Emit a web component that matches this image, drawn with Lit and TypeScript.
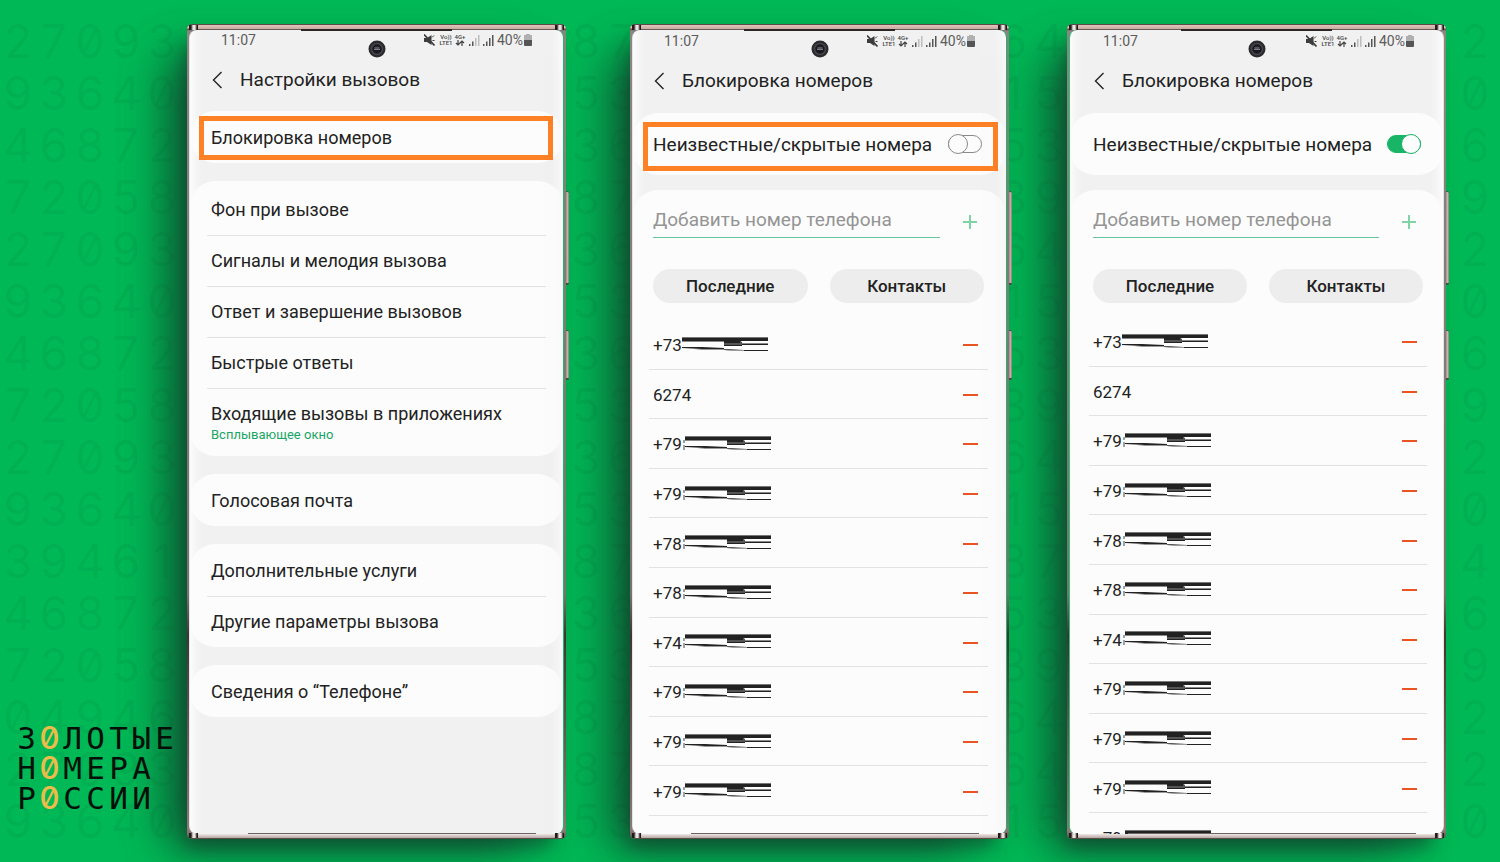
import { LitElement, html, css, svg, nothing } from "lit";
import { customElement, property } from "lit/decorators.js";

const LEFT = ["27093", "93640", "46872", "72058", "27093", "93640", "46872", "72058", "27093", "93640", "39461", "46872", "72058", "04946", "27093", "93640"];
const MIDDLE = ["87", "53", "36", "87", "36", "53", "36", "53", "36", "53", "87", "36", "53", "87", "87", "53"];
const RIGHT = ["64", "15", "53", "39", "64", "15", "53", "39", "64", "15", "87", "53", "39", "64", "64", "15"];
const EDGE = ["2", "0", "6", "9", "2", "0", "6", "9", "2", "0", "4", "6", "9", "2", "2", "0"];
const NUMBERS = ["+73", "6274", "+79", "+79", "+78", "+78", "+74", "+79", "+79", "+79"];

@customElement("digit-column")
class DigitColumn extends LitElement {
  @property({ attribute: false }) rows: string[] = [];
  static styles = css`
    :host { display: flex; flex-direction: column; justify-content: space-between; min-width: 0; padding: 15px 0 19px; box-sizing: border-box; height: 100vh; }
    .row { display: flex; height: 52px; align-items: center; }
    :host(.right) .row { justify-content: flex-end; }
    .cell { flex: 0 0 36px; text-align: center; font: 400 46px/52px Inter, sans-serif; font-feature-settings: "zero" 1; color: rgba(0, 90, 45, 0.1); }
  `;
  render() {
    return this.rows.map((r) => html`<div class="row">${[...r].map((d) => html`<span class="cell">${d}</span>`)}</div>`);
  }
}

@customElement("brand-mark")
class BrandMark extends LitElement {
  static styles = css`
    :host { display: block; }
    .line { display: flex; height: 30px; }
    .letter { flex: 0 0 23px; display: flex; justify-content: center; font: 400 31px/30px "DejaVu Sans Mono", monospace; color: #071008; }
    .gold { font-family: Inter, sans-serif; font-weight: 500; font-feature-settings: "zero" 1; color: #ecbc4b; }
  `;
  render() {
    return ["З0ЛОТЫЕ", "Н0МЕРА", "Р0ССИИ"].map(
      (w) => html`<div class="line">${[...w].map((c) => html`<span class="letter ${c === "0" ? "gold" : ""}">${c}</span>`)}</div>`
    );
  }
}

@customElement("status-bar")
class StatusBar extends LitElement {
  static styles = css`
    :host { display: flex; align-items: center; justify-content: space-between; height: 20px; font: 400 14px/20px Roboto, sans-serif; color: #5c5c5c; }
    .right { display: flex; align-items: center; }
    .tiny { display: block; font: 500 6px/6px Roboto, sans-serif; text-align: center; color: #444; }
    .net { width: 14px; margin-left: 4px; }
    .gen { width: 12px; margin-left: 1px; }
    .bars { margin-left: 3px; }
    .percent { margin: 0 1px 0 3px; }
    svg { display: block; }
  `;
  bars(tone: string) {
    return html`<svg class="bars" width="11" height="12" viewBox="0 0 11 12">
      <path d="M0 10h1.500v2H0z M3 7.500h1.500v4.500H3z" fill="#555" /><path d="M6 4h1.500v8H6z M9 1h1.500v11H9z" fill=${tone} />
    </svg>`;
  }
  render() {
    return html`<span>11:07</span>
      <div class="right">
        <svg width="11" height="12" viewBox="0 0 11 12">
          <path d="M0 4h3L7.500 1v10L3 8H0z" fill="#3d3d3d" /><path d="M8 3.500l2-2M8.500 6.500h2" stroke="#3d3d3d" />
          <path d="M0 .5l10.500 11" stroke="#3d3d3d" stroke-width="1.600" />
        </svg>
        <span class="net"><span class="tiny">Vo))</span><span class="tiny">LTE1</span></span>
        <span class="gen"><span class="tiny">4G+</span>
          <svg width="12" height="6" viewBox="0 0 12 6"><path d="M4 0v5M2 3l2 2 2-2M8 6V1M6 3l2-2 2 2" fill="none" stroke="#444" stroke-width="1.200" /></svg>
        </span>
        ${this.bars("#bdbdbd")}${this.bars("#555")}
        <span class="percent">40%</span>
        <svg width="8" height="12" viewBox="0 0 8 12"><path d="M2 0h4v1h2v6H0V1h2z" fill="#b0b0b0" /><path d="M0 6h8v5q0 1-1 1H1q-1 0-1-1z" fill="#555" /></svg>
      </div>`;
  }
}

@customElement("phone-frame")
class PhoneFrame extends LitElement {
  @property() heading = "";
  static styles = css`
    :host { position: relative; display: block; box-sizing: border-box; min-width: 0; height: calc(100vh - 47px); margin-top: 24px; padding: 6px 2px 5px; border-radius: 5px;
      background: linear-gradient(#5b4a48 0 1px, #d9bdb5 2px 4px, #5b4a48 5px, #8b8682 7px, #77746f 70%, #3f3535 75%, #8b7b78 99%, #5b4a48);
      box-shadow: -8px 14px 18px -6px rgba(18, 60, 42, 0.6), -32px 20px 44px -12px rgba(18, 60, 42, 0.8); }
    .screen { display: flex; flex-direction: column; box-sizing: border-box; height: 100%; overflow: hidden; border-radius: 8px; padding-top: var(--shift, 0);
      background: linear-gradient(90deg, #fcfcfc, #f5f5f5 6px, #f1f1f1 12px, #f1f1f1 calc(100% - 12px), #f5f5f5 calc(100% - 6px), #fcfcfc);
      border-left: var(--left-line, 1px solid #e4e4e4); border-right: var(--right-line, 1px solid #28b56c); }
    status-bar { flex: none; padding: 0 var(--status-right, 31px) 0 var(--status-left, 31px); }
    header { display: flex; align-items: center; flex: none; height: 59px; padding-left: var(--head, 22px); }
    .back { display: block; padding: 0; border: 0; background: none; line-height: 0; }
    h1 { margin: 0 0 0 17px; font: 400 19px/24px Roboto, sans-serif; color: #222; }
    .camera { position: absolute; left: calc(50% - 9px); top: 16px; }
    .key { position: absolute; left: 100%; width: 3px; border-radius: 0 2px 2px 0; background: linear-gradient(90deg, #8d6d69, #dcc6c1 1px, #8b7f7b); border-top: 1px solid #555; border-bottom: 2px solid #4b4b45; box-sizing: border-box; }
    .volume { top: 167px; height: 94px; }
    .power { top: 306px; height: 50px; }
    .rail { position: absolute; left: 10px; right: 10px; height: 4px; border-radius: 2px; box-sizing: border-box; }
    .upper { top: 1px; background: linear-gradient(#e2c4bb, #c9aaa2); }
    .lower { bottom: 1px; background: linear-gradient(#efe8e6, #b7a6a3); }
    .corner { position: absolute; width: 9px; height: 5px; box-sizing: border-box; background: linear-gradient(90deg, #241c1c 0 2px, #e9e3e1 4px 6px, #241c1c 8px); }
    .tl { left: 2px; top: 1px; }
    .tr { right: 2px; top: 1px; }
    .bl { left: 2px; bottom: 1px; }
    .br { right: 2px; bottom: 1px; }
    .earpiece { position: absolute; top: 5px; left: 30%; right: 30%; height: 2px; background: #2d2424; }
    .port { position: absolute; bottom: 5px; left: 16%; right: 8%; height: 1px; background: #6b6666; }
  `;
  render() {
    return html`<div class="screen">
        <status-bar></status-bar>
        <header>
          <button class="back" aria-label="Назад">
            <svg width="11" height="18" viewBox="0 0 11 18"><path d="M9.500 1L1.500 9l8 8" fill="none" stroke="#222" stroke-width="1.400" /></svg>
          </button>
          <h1>${this.heading}</h1>
        </header>
        <slot></slot>
      </div>
      <svg class="camera" width="18" height="18" viewBox="0 0 18 18">
        <circle cx="9" cy="9" r="8.500" fill="#2a292b" /><circle cx="9" cy="9" r="5.500" fill="#19191d" stroke="#46454d" stroke-width="1.500" />
        <ellipse cx="9" cy="8" rx="3" ry="1.300" fill="#55535f" /><path d="M6 9.500h6" stroke="#7c7a89" />
      </svg>
      <span class="rail upper"></span><span class="rail lower"></span>
      <span class="corner tl"></span><span class="corner tr"></span><span class="corner bl"></span><span class="corner br"></span>
      <span class="earpiece"></span><span class="port"></span>
      <span class="key volume"></span><span class="key power"></span>`;
  }
}

@customElement("settings-menu")
class SettingsMenu extends LitElement {
  static styles = css`
    :host { display: flex; flex-direction: column; gap: 18px; margin-top: 2px; }
    .card { position: relative; padding-top: 1px; border-radius: 25px; background: #fcfcfc; }
    .long { padding-top: 3px; }
    .item { display: block; box-sizing: border-box; width: calc(100% - 34px); height: 51px; margin: 0 17px; padding: 0 4px; border: 0; background: none; text-align: left; font: 400 18px/24px Roboto, sans-serif; color: #222; }
    .item + .item { border-top: 1px solid #e2e2e2; }
    .double { height: 68px; }
    .note { display: block; font-size: 13px; line-height: 18px; color: #18a566; }
    .mark { position: absolute; inset: 5px 10px 3px 9px; border: 5px solid #ff8126; pointer-events: none; }
  `;
  render() {
    const item = (t: string) => html`<button class="item">${t}</button>`;
    return html`
      <div class="card">${item("Блокировка номеров")}<span class="mark"></span></div>
      <div class="card long">
        ${["Фон при вызове", "Сигналы и мелодия вызова", "Ответ и завершение вызовов", "Быстрые ответы"].map(item)}
        <button class="item double">Входящие вызовы в приложениях<span class="note">Всплывающее окно</span></button>
      </div>
      <div class="card">${item("Голосовая почта")}</div>
      <div class="card">${item("Дополнительные услуги")}${item("Другие параметры вызова")}</div>
      <div class="card">${item("Сведения о “Телефоне”")}</div>`;
  }
}

@customElement("block-list")
class BlockList extends LitElement {
  @property({ type: Boolean }) on = false;
  @property({ type: Boolean }) marked = false;
  @property({ attribute: false }) numbers: string[] = NUMBERS;
  static styles = css`
    :host { display: flex; flex-direction: column; flex: 1; min-height: 0; gap: 15px; margin-top: 3px; font: 400 18px/24px Roboto, sans-serif; color: #222; }
    .card { position: relative; flex: none; box-sizing: border-box; background: #fcfcfc; border-radius: 25px; padding: 0 var(--pad-right) 0 var(--pad-left); }
    .toggle { display: flex; align-items: center; justify-content: space-between; height: 62px; padding-right: calc(var(--pad-right) + 6px); padding-left: calc(var(--pad-left) + 4px); }
    .toggle label { font-size: 19px; padding-top: 1px; white-space: nowrap; }
    .switch { position: relative; flex: none; appearance: none; margin: 0; box-sizing: border-box; width: 34px; height: 18px; border: 1px solid #8a8a8a; border-radius: 9px; background: #fcfcfc; }
    .switch::before { content: ""; position: absolute; left: -1px; top: -2px; box-sizing: border-box; width: 20px; height: 20px; border: 1px solid #8a8a8a; border-radius: 50%; background: #fcfcfc; }
    .switch:checked { background: #18b566; border-color: #18b566; }
    .switch:checked::before { left: auto; right: -1px; border-color: #18b566; }
    .mark { position: absolute; inset: 9px 8px 4px 10px; border: 5px solid #ff8126; pointer-events: none; }
    .main { flex: 1; border-radius: 25px 25px 0 0; min-height: 0; padding-top: 14px; }
    .entry { display: flex; align-items: center; justify-content: space-between; padding: 0 9px 0 4px; }
    .field { flex: 1; min-width: 0; height: 34px; box-sizing: border-box; margin-right: 21px; padding: 0 0 3px; border: 0; outline: 0; border-radius: 0; background: linear-gradient(#62c79c, #62c79c) bottom / 100% 1px no-repeat; font: 400 19px/24px Roboto, sans-serif; }
    .field::placeholder { color: #949494; opacity: 1; }
    .icon { display: block; padding: 0; border: 0; background: none; line-height: 0; }
    .icon.add { padding-top: 2px; }
    .tabs { display: grid; grid-template-columns: 1fr 1fr; gap: 22px; margin: 31px 4px 0; }
    .tabs button { height: 34px; padding: 0; border: 0; border-radius: 17px; background: #ededed; font: 500 17px/24px Roboto, sans-serif; color: #222; }
    ul { display: flex; flex-direction: column; height: 496px; margin: var(--list-gap) 0 0; padding: 0; list-style: none; }
    li { display: flex; align-items: center; flex: 0 0 10%; box-sizing: border-box; padding: 2px 10px 0 4px; border-bottom: 1px solid #e2e2e2; font-size: 17px; }
    .scribble { display: block; margin-bottom: 1px; }
    .icon.remove { margin-left: auto; }
  `;
  scribble(full: boolean) {
    return html`<svg class="scribble" width="90" height="16" viewBox="0 0 90 16" aria-hidden="true">
      ${full ? nothing : svg`<path d="M2 4v3M2 9v5" stroke="#444" fill="none" />`}
      <g transform=${full ? "translate(0 0)" : "translate(3 0)"}>
        <rect width="86" height="15" fill="#fcfcfc" />
        <path d="M0 0h86v1H0z" fill="#777" />
        <path d="M0 1h86v3H60l-2 1H42L0 4z" fill="#222" />
        <path d="M0 4h42v1H0z" fill="#888" />
        <path d="M42 5h18v4H42z" fill="#555" /><path d="M42 5h16v1H42z M42 8h18v1H42z" fill="#222" />
        <path d="M60 7h26v1H60z" fill="#222" /><path d="M60 6h26v1H60z" fill="#888" />
        <path d="M0 10h20l22 1v2L20 12 0 11z M42 12l20 1h24v1H62l-20-1z" fill="#222" />
        <path d="M12 12h30v1H20z M42 13h20v1H52z" fill="#999" />
      </g>
    </svg>`;
  }
  render() {
    return html`
      <div class="card toggle">
        <label for="hidden">Неизвестные/скрытые номера</label>
        <input id="hidden" class="switch" type="checkbox" role="switch" .checked=${this.on} />
        ${this.marked ? html`<span class="mark"></span>` : nothing}
      </div>
      <div class="card main">
        <div class="entry">
          <input class="field" type="tel" aria-label="Добавить номер телефона" placeholder="Добавить номер телефона" />
          <button class="icon add" aria-label="Добавить">
            <svg width="18" height="18" viewBox="0 0 18 18"><path d="M9 2v14M2 9h14" stroke="#7fd3a4" stroke-width="2" /></svg>
          </button>
        </div>
        <div class="tabs"><button>Последние</button><button>Контакты</button></div>
        <ul>
          ${this.numbers.map(
            (n) => html`<li><span>${n}</span>${n[0] === "+" ? this.scribble(n === "+73") : nothing}
              <button class="icon remove" aria-label="Удалить">
                <svg width="16" height="16" viewBox="0 0 16 16"><path d="M1 8h15" stroke="#ea5322" stroke-width="2" /></svg>
              </button></li>`
          )}
        </ul>
      </div>`;
  }
}

@customElement("app-root")
class AppRoot extends LitElement {
  static styles = css`
    :host { display: block; }
    .page { position: relative; display: grid; grid-template-columns: 187fr 379fr 64fr 379fr 58fr 379fr 54fr; height: 100vh; overflow: hidden; background: #00b956; }
    .gap { padding-left: 2px; }
    .edge { padding-left: 11px; }
    .second { --shift: 1px; --head: 21px; --pad-left: 16px; --pad-right: 18px; --list-gap: 17px; }
    .third { --shift: 1px; --head: 24px; --status-left: 33px; --status-right: 29px; --pad-left: 19px; --pad-right: 16px; --list-gap: 14px; --left-line: 1px solid #1fc96c; --right-line: 1px solid #e4e4e4; }
    .brand { position: absolute; left: 15px; bottom: 49px; }
  `;
  render() {
    return html`<main class="page">
      <digit-column .rows=${LEFT}></digit-column>
      <phone-frame heading="Настройки вызовов"><settings-menu></settings-menu></phone-frame>
      <digit-column class="gap" .rows=${MIDDLE}></digit-column>
      <phone-frame class="second" heading="Блокировка номеров"><block-list marked></block-list></phone-frame>
      <digit-column class="right" .rows=${RIGHT}></digit-column>
      <phone-frame class="third" heading="Блокировка номеров"><block-list on .numbers=${[...NUMBERS, "+79"]}></block-list></phone-frame>
      <digit-column class="edge" .rows=${EDGE}></digit-column>
      <brand-mark class="brand"></brand-mark>
    </main>`;
  }
}
